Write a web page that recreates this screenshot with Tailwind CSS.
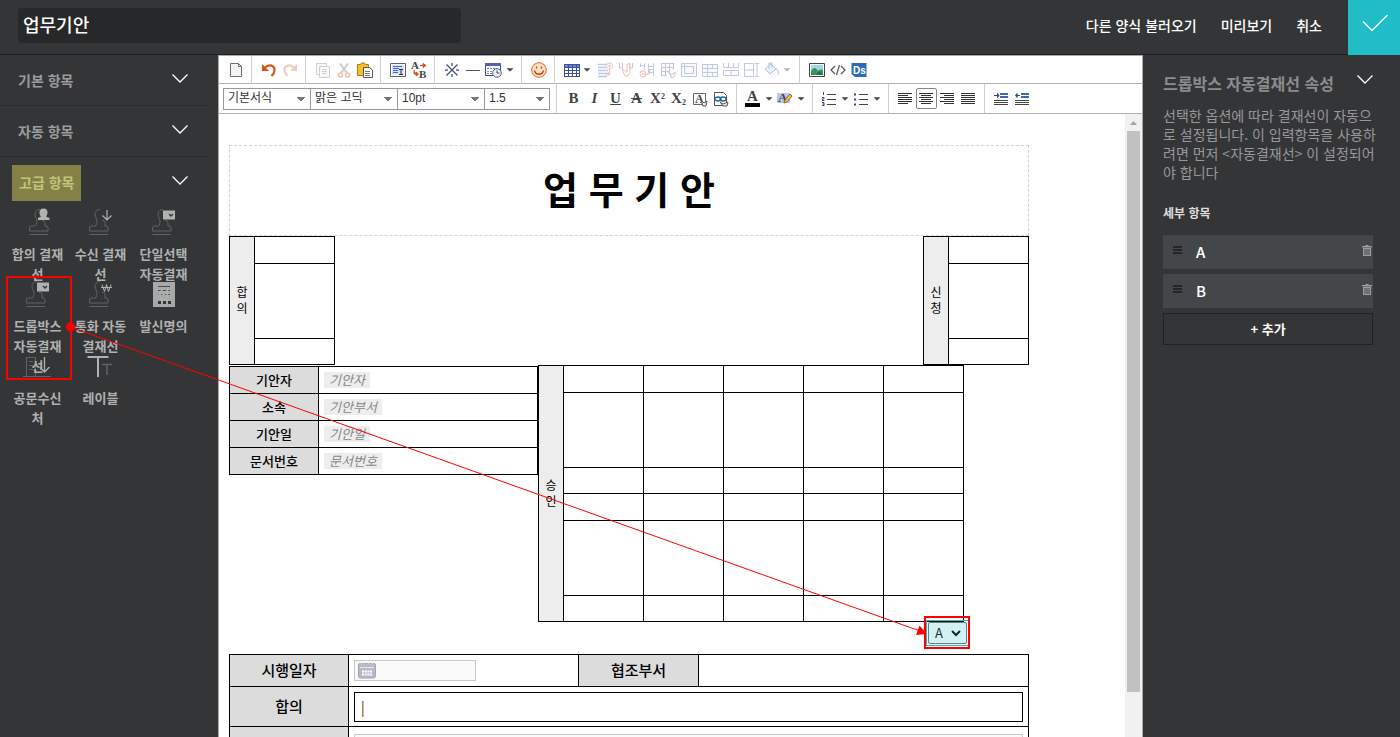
<!DOCTYPE html>
<html lang="ko">
<head>
    <meta charset="UTF-8">
    <meta name="viewport" content="width=device-width, initial-scale=1.0">
    <title>업무기안</title>
    <script src="https://cdn.jsdelivr.net/npm/@tailwindcss/browser@4"></script>
</head>
<body class="relative flex h-screen flex-col overflow-hidden bg-[#343537] font-['Noto_Sans_CJK_KR',sans-serif] text-white">

    <!-- Shared shapes -->
    <svg class="hidden">
        <symbol id="stamp" viewBox="0 0 30 28">
            <path d="M14 1.500c-3 0-5 2-5 5 0 2.500 2 4 2 7 0 1.500-.5 3-1.500 4.500H5.500a2 2 0 0 0-2 2V23h18.500v-3a2 2 0 0 0-2-2h-1v-3.500a2 2 0 0 0-2-2h-1M3.500 26.500h18.500" fill="none" stroke="#616263" />
        </symbol>
        <symbol id="caret" viewBox="0 0 8 5"><path d="M0 0h8v1H7v1H6v1H5v1H3V3H2V2H1V1H0z" fill="currentColor" /></symbol>
        <symbol id="chevron" viewBox="0 0 16 9"><path d="M.5.5 8 8 15.500.5" fill="none" stroke="#fff" stroke-width="1.3" /></symbol>
        <symbol id="trash" viewBox="0 0 10 11"><path d="M3.500 0h3v1H10v1.500H0V1h3.500zM1 3h8v8H1z" fill="#9b9c9d" /><path d="M3 4v6M5 4v6M7 4v6" stroke="#444749" /></symbol>
        <symbol id="grip" viewBox="0 0 9 8"><path d="M0 1h9M0 4h9M0 7h9" stroke="#242628" stroke-width="2" /></symbol>
    </svg>

    <header class="flex h-[55px] shrink-0 items-center border-b border-[#1f2021]">
        <input type="text" aria-label="양식 제목" value="업무기안" class="ml-[18px] mb-1 h-[35px] w-[443px] rounded bg-[#27282a] px-[5px] pb-[2px] text-lg font-medium text-white">
        <nav class="ml-auto flex h-[55px] items-center text-sm font-medium">
            <a href="#load" class="mr-6 mb-1">다른 양식 불러오기</a>
            <a href="#preview" class="mr-6 mb-1">미리보기</a>
            <a href="#cancel" class="mr-[26px] mb-1">취소</a>
            <button aria-label="저장" class="h-[55px] w-[52px] bg-[#20bdc9]">
                <svg class="ml-[14px] -mt-2 h-[18px] w-[26px]" viewBox="0 0 26 18" fill="none" stroke="#fff" stroke-width="1.300"><path d="M1 7.500 10 16.500 25.500 1" /></svg>
            </button>
        </nav>
    </header>

    <main class="flex min-h-0 flex-1">
        <!-- Left: form items -->
        <aside class="w-[218px] shrink-0 pr-[10px] text-sm font-bold text-[#9b9c9d]">
            <button class="flex h-[51px] w-full items-center justify-between border-b border-[#292a2c] pl-[18px] pr-5">기본 항목<svg class="mb-1 h-[9px] w-4"><use href="#chevron" /></svg></button>
            <button class="flex h-[51px] w-full items-center justify-between border-b border-[#292a2c] pl-[18px] pr-5">자동 항목<svg class="mb-1 h-[9px] w-4"><use href="#chevron" /></svg></button>
            <button class="flex h-[51px] w-full items-center justify-between pl-3 pr-5">
                <span class="bg-[#838146] px-[7px] pt-[7px] pb-[9px] text-[#c4c27c]">고급 항목</span>
                <svg class="mb-1 h-[9px] w-4"><use href="#chevron" /></svg>
            </button>
            <div class="grid w-[195px] grid-cols-3 pl-[6px] text-[13px] leading-5 text-[#b0b1b1]">
                <button class="relative z-20 flex h-[72px] flex-col items-center justify-start px-1">
                    <svg class="mb-2 h-7 w-[30px] shrink-0" viewBox="0 0 30 28"><use href="#stamp" x="3" width="30" height="28" /><path d="M16.500 4.500a4 4 0 0 1 8 0c0 2-.8 3-1.500 4l3.500 1.500V12H15v-2l3-1.500c-1-1-1.500-2-1.500-4z" fill="#b0b1b1" /></svg>
                    합의 결재선
                </button>
                <button class="relative z-20 flex h-[72px] flex-col items-center justify-start px-1">
                    <svg class="mb-2 h-7 w-[30px] shrink-0" viewBox="0 0 30 28"><use href="#stamp" width="30" height="28" /><path d="M21 2v10M16.500 7.500 21 12l4.500-4.500" fill="none" stroke="#b0b1b1" stroke-width="1.200" /></svg>
                    수신 결재선
                </button>
                <button class="relative z-20 flex h-[72px] flex-col items-center justify-start px-1">
                    <svg class="mb-2 h-7 w-[30px] shrink-0" viewBox="0 0 30 28"><use href="#stamp" width="30" height="28" /><path d="M14 2.500h12v9H14z" fill="#b0b1b1" /><path d="m20 6 2 2 2-2" fill="none" stroke="#343537" stroke-width="1.300" /></svg>
                    단일선택 자동결재선
                </button>
                <button class="relative z-10 flex h-[72px] flex-col items-center justify-start px-1">
                    <svg class="mb-2 h-7 w-[30px] shrink-0" viewBox="0 0 30 28"><use href="#stamp" width="30" height="28" /><path d="M14 2.500h12v9H14z" fill="#b0b1b1" /><path d="m20 6 2 2 2-2" fill="none" stroke="#343537" stroke-width="1.300" /></svg>
                    드롭박스 자동결재선
                </button>
                <button class="relative z-10 flex h-[72px] flex-col items-center justify-start px-1">
                    <svg class="mb-2 h-7 w-[30px] shrink-0" viewBox="0 0 30 28"><use href="#stamp" width="30" height="28" /><path d="m16 4.500 2.500 7 2-7 2 7 2.500-7M15 7.500h11" fill="none" stroke="#b0b1b1" /></svg>
                    통화 자동결재선
                </button>
                <button class="relative z-10 flex h-[72px] flex-col items-center justify-start px-1">
                    <svg class="mb-2 h-7 w-[30px] shrink-0" viewBox="0 0 30 28"><path d="M4 2h22v25H4z" fill="#a7a8a9" /><path d="M9 6.500h12M9 10.500h12M9 14.500h12" stroke="#4b4c4e" /><path d="M9 22.500h3M14 22.500h3M19 22.500h3" stroke="#343537" stroke-width="3" /></svg>
                    발신명의
                </button>
                <button class="flex h-[72px] flex-col items-center justify-start px-1">
                    <svg class="mb-2 h-7 w-[30px] shrink-0" viewBox="0 0 30 28"><path d="M3.500 24V5.500h9V24M6 9.500h4M6 13.500h4M6 17.500h4M0 24.500h28" fill="none" stroke="#616263" /><path d="M21.500 5v15M16.500 15l5 5 5-5" fill="none" stroke="#b0b1b1" stroke-width="1.300" /></svg>
                    공문수신처
                </button>
                <button class="flex h-[72px] flex-col items-center justify-start px-1">
                    <svg class="mb-2 h-7 w-[30px] shrink-0" viewBox="0 0 30 28"><path d="M1.500 5h21M12 5v20" stroke="#b0b1b1" stroke-width="2" /><path d="M16 12.500h10M21 12v11" stroke="#616263" stroke-width="1.500" /></svg>
                    레이블
                </button>
            </div>
        </aside>

        <!-- Center: editor -->
        <section class="flex min-w-0 flex-1 flex-col border border-b-0 border-[#a9a9a9] bg-white text-black">
            <div class="flex h-7 shrink-0 items-center border-b border-[#b0b0b0] text-[#444]">
                <div class="flex pl-[6px] pr-[5px]">
                    <button aria-label="새 문서" class="flex w-[21px] justify-center"><svg class="size-4" viewBox="0 0 16 16"><path d="M2.500 1.500h8l3 3v10h-11z" fill="#f5f5f5" stroke="#707070" /><path d="M10.500 1.500v3h3" fill="none" stroke="#707070" /></svg></button>
                </div>
                <div class="flex h-7 items-center border-l border-[#d0d0d0] pl-[6px] pr-[5px]">
                    <button aria-label="실행 취소" class="flex w-[21px] justify-center"><svg class="size-4" viewBox="0 0 16 16"><path d="M4 5.500c4-4 10-2 9.500 3 0 2.500-1.500 4-3 5.500" fill="none" stroke="#d9541a" stroke-width="2.200" /><path d="M1 2v7h7z" fill="#d9541a" /></svg></button>
                    <button aria-label="다시 실행" class="flex w-[21px] justify-center opacity-30"><svg class="size-4" viewBox="0 0 16 16"><path d="M12 5.500c-4-4-10-2-9.500 3 0 2.500 1.500 4 3 5.500" fill="none" stroke="#d9541a" stroke-width="2.200" /><path d="M15 2v7H8z" fill="#d9541a" /></svg></button>
                </div>
                <div class="flex h-7 items-center border-l border-[#d0d0d0] pl-[6px] pr-[5px]">
                    <button aria-label="복사" class="flex w-[21px] justify-center opacity-35"><svg class="size-4" viewBox="0 0 16 16" fill="#f2f2f2" stroke="#777"><path d="M1.500 1.500h10v11h-10z" /><path d="M4.500 4.500h10v11h-10z" /><path d="M7 7.500h5M7 9.500h5M7 11.500h5" /></svg></button>
                    <button aria-label="잘라내기" class="flex w-[21px] justify-center opacity-35"><svg class="size-4" viewBox="0 0 16 16" fill="none"><path d="M4 1.500 11 11M12 1.500 5 11" stroke="#666" stroke-width="2" /><circle cx="4.500" cy="13" r="2" stroke="#d9541a" stroke-width="1.500" /><circle cx="11.500" cy="13" r="2" stroke="#d9541a" stroke-width="1.500" /></svg></button>
                    <button aria-label="붙여넣기" class="flex w-[21px] justify-center"><svg class="size-4" viewBox="0 0 16 16"><path d="M.5 2.500h3l1-1.500h3l1 1.500h3v11H.5z" fill="#f8bd24" stroke="#b07a12" /><path d="M6.500 5.500h6l3 2.500v7.500h-9z" fill="#fff" stroke="#555" /><path d="M8 9.500h5M8 11.500h5M8 13.500h5" stroke="#777" /></svg></button>
                </div>
                <div class="flex h-7 items-center border-l border-[#d0d0d0] pl-[6px] pr-[5px]">
                    <button aria-label="모두 선택" class="flex w-[21px] justify-center"><svg class="size-4" viewBox="0 0 16 16"><path d="M.5 1.500h15v13H.5z" fill="#fff" stroke="#5c6173" /><path d="M2 3h12v9H2z" fill="#d5dfff" /><path d="M3 4.500h9M3 6.500h6M3 8.500h5M3 10.500h5" stroke="#4a68c8" /><path d="M9 7.500h4M11 7.500v5M9 12.500h4" stroke="#333" /></svg></button>
                    <button aria-label="찾기/바꾸기" class="flex w-[21px] justify-center"><svg class="h-4 w-[18px] overflow-visible font-['Liberation_Serif',serif] text-[11px] font-bold" viewBox="0 0 18 16"><text x="1" y="7" fill="#444">A</text><text x="9" y="16" fill="#444">B</text><path d="M10 3.500h3V1.500l3 2-3 2V3.500M4 8v4h2v-2l2.500 2L6 14v-2" fill="#d9541a" stroke="#d9541a" /></svg></button>
                </div>
                <div class="flex h-7 items-center border-l border-[#d0d0d0] pl-[6px] pr-[5px]">
                    <button aria-label="특수문자" class="flex w-[21px] justify-center"><svg class="size-4" viewBox="0 0 16 16"><path d="m2.500 2.500 11 11M13.500 2.500l-11 11" stroke="#454f74" stroke-width="1.300" /><path d="M7 1h2v3H7zM7 12h2v3H7zM1 7h3v2H1zM12 7h3v2h-3z" fill="#7b87b4" /></svg></button>
                    <button aria-label="가로줄" class="flex w-[21px] justify-center"><svg class="size-4" viewBox="0 0 16 16"><path d="M1 8.500h14" stroke="#555" /></svg></button>
                    <button aria-label="날짜" class="flex w-[33px] items-center gap-1 pl-px"><svg class="h-4 w-[19px] shrink-0" viewBox="0 0 19 16"><path d="M1.500 1.500h15v12h-15z" fill="#fff" stroke="#3d4a86" /><path d="M1 1h16v3H1z" fill="#4e63b5" /><path d="M3 6.500h11M3 9.500h8M3 11.500h7" stroke="#7f8fc8" stroke-dasharray="2 1" /><circle cx="13" cy="11" r="4.300" fill="#eef1fa" stroke="#5c6484" /><path d="M13 8.500V11h2.500" fill="none" stroke="#444" /></svg><svg class="h-[4px] w-[6px]"><use href="#caret" /></svg></button>
                </div>
                <div class="flex h-7 items-center border-l border-[#d0d0d0] pl-[6px] pr-[5px]">
                    <button aria-label="이모티콘" class="flex w-[21px] justify-center"><svg class="size-4" viewBox="0 0 16 16"><circle cx="8" cy="8" r="7.300" fill="#ffdfc2" stroke="#d36a2c" /><path d="M5.500 4.500v2M10.500 4.500v2M3.500 8.500c1 5 8 5 9 0" fill="none" stroke="#b8440c" stroke-width="1.300" /></svg></button>
                </div>
                <div class="flex h-7 items-center border-l border-[#d0d0d0] pl-[6px] pr-[5px]">
                    <button aria-label="표" class="flex w-[33px] items-center gap-1 pl-[3px]"><svg class="size-4" viewBox="0 0 16 16"><path d="M1 2h14v12H1z" fill="#fff" /><path d="M1 2h14v3H1z" fill="#6e84d4" /><path d="M.5 2.500h15M.5 5.500h15M.5 8.500h15M.5 11.500h15M.5 14.500h15M.5 2v13M4.500 2v13M8.500 2v13M12.500 2v13M15.500 2v13" stroke="#3e519f" /></svg><svg class="h-[4px] w-[6px]"><use href="#caret" /></svg></button>
                    <button aria-label="행 삽입" class="flex w-[21px] justify-center opacity-35"><svg class="size-4" viewBox="0 0 16 16" fill="none" stroke="#4a64c0"><path d="M1 2.500h9M1 5.500h8M1 8.500h10M1 11.500h11M1 14.500h9" stroke-width="1.500" /><circle cx="12.500" cy="4" r="3" stroke="#e0482e" /><path d="M11 4h3M12.500 2.500v3M12.500 7v6H9" stroke="#e0482e" /></svg></button>
                    <button aria-label="행 삭제" class="flex w-[21px] justify-center opacity-35"><svg class="size-4" viewBox="0 0 16 16" fill="none" stroke="#4a64c0"><path d="M1.500 1v5h3V1M11.500 1v5h3V1" /><path d="m4 7 5 3V2h3v8l-2 4H7z" stroke="#e0482e" /></svg></button>
                    <button aria-label="열 삽입" class="flex w-[21px] justify-center opacity-35"><svg class="size-4" viewBox="0 0 16 16" fill="none" stroke="#4a64c0"><path d="M5.500 8V1.500M9.500 11V1.500M14.500 14V1.500M1.500 5V1.500M1 3.500h4M10 4.500h4M10 7.500h4M10 10.500h4" /><circle cx="4" cy="12" r="3" stroke="#e0482e" /><path d="M2.500 12h8V8" stroke="#e0482e" /></svg></button>
                    <button aria-label="표 편집" class="flex w-[21px] justify-center opacity-35"><svg class="size-4" viewBox="0 0 16 16" fill="none" stroke="#4a64c0"><path d="M1 1.500h12M1 5.500h12M1 9.500h9M1 13.500h6M1.500 1v13M5.500 1v13M9.500 1v9M13.500 1v7" /><path d="m8 9 4 4 3-3v4l-3 2z" stroke="#666" /></svg></button>
                    <button aria-label="표 속성" class="flex w-[21px] justify-center opacity-35"><svg class="size-4" viewBox="0 0 16 16" fill="#eef1ff" stroke="#4a64c0"><path d="M.5 1.500h15v13H.5zM3.500 4.500h9v7h-9zM.5 4.500h3M3.500 1.500v3" /></svg></button>
                    <button aria-label="셀 속성" class="flex w-[21px] justify-center opacity-35"><svg class="size-4" viewBox="0 0 16 16" fill="#eef1ff" stroke="#4a64c0"><path d="M.5 2.500h15v12H.5zM.5 6.500h15M.5 10.500h15M5.500 2.500v12M10.500 2.500v4M10.500 10.500v4" /></svg></button>
                    <button aria-label="셀 병합" class="flex w-[21px] justify-center opacity-35"><svg class="size-4" viewBox="0 0 16 16" fill="none" stroke="#4a64c0"><path d="M.5 1v4.500h15V1M5.500 1v4M10.500 1v4M.5 8.500h15v5H.5zM8 8.500v5" /></svg></button>
                    <button aria-label="셀 분할" class="flex w-[21px] justify-center opacity-35"><svg class="size-4" viewBox="0 0 16 16" fill="none" stroke="#4a64c0"><path d="M.5 1.500h9v13h-9zM.5 8h9M11 1.500h4M13 1.500v13M11 14.500h4" /></svg></button>
                    <button aria-label="셀 배경색" class="flex w-[32px] items-center gap-1 pl-[2px] opacity-40"><svg class="size-4" viewBox="0 0 16 16" fill="#cfdaff" stroke="#4a64c0"><path d="m1 7 6-5 5 5-6 5zM5 7V1h3v5M12 6c2 2 2.500 4 2 7" /></svg><svg class="h-[4px] w-[6px]"><use href="#caret" /></svg></button>
                </div>
                <div class="flex h-7 items-center border-l border-[#d0d0d0] pl-[6px]">
                    <button aria-label="이미지" class="flex w-[21px] justify-center"><svg class="size-4" viewBox="0 0 16 16"><path d="M.5 1.500h15v13H.5z" fill="#fff" stroke="#444" /><path d="M2 3h12v10H2z" fill="#9ed6ee" /><path d="M2 9c3-5 5-3 7 0l3-2 2 2v4H2z" fill="#3e8f58" /><path d="m7 13 3-4 4 4z" fill="#1e6b5c" /></svg></button>
                    <button aria-label="HTML" class="flex w-[21px] justify-center"><svg class="size-4" viewBox="0 0 16 16" fill="none" stroke="#555" stroke-width="1.200"><path d="M5 4 1 8l4 4M11 4l4 4-4 4M9.500 3l-3 10" /></svg></button>
                    <button aria-label="Ds" class="flex w-[21px] justify-center"><svg class="size-4 font-['Liberation_Sans',sans-serif] text-[10px] font-bold" viewBox="0 0 16 16"><path d="M.5 1h15v14H4L.5 12z" fill="#2f6bb4" /><text x="2" y="12" fill="#fff">Ds</text></svg></button>
                </div>
            </div>

            <div class="flex h-[30px] shrink-0 items-center border-b border-[#b0b0b0] pl-1 text-[#444]">
                <div class="flex pr-[6px] font-['Liberation_Sans','Noto_Sans_CJK_KR',sans-serif] text-xs text-[#333]">
                    <div class="relative">
                        <select aria-label="서식" class="h-[22px] w-[88px] appearance-none border border-[#999] bg-white pb-[2px] pl-1"><option>기본서식</option></select>
                        <svg class="pointer-events-none absolute right-[6px] top-[9px] h-[5px] w-2 text-[#777]"><use href="#caret" /></svg>
                    </div>
                    <div class="relative -ml-px">
                        <select aria-label="글꼴" class="h-[22px] w-[88px] appearance-none border border-[#999] bg-white pb-[2px] pl-1"><option>맑은 고딕</option></select>
                        <svg class="pointer-events-none absolute right-[6px] top-[9px] h-[5px] w-2 text-[#777]"><use href="#caret" /></svg>
                    </div>
                    <div class="relative -ml-px">
                        <select aria-label="글자 크기" class="h-[22px] w-[88px] appearance-none border border-[#999] bg-white pb-[2px] pl-1"><option>10pt</option></select>
                        <svg class="pointer-events-none absolute right-[6px] top-[9px] h-[5px] w-2 text-[#777]"><use href="#caret" /></svg>
                    </div>
                    <div class="relative -ml-px">
                        <select aria-label="줄 간격" class="h-[22px] w-[66px] appearance-none border border-[#999] bg-white pb-[2px] pl-1"><option>1.5</option></select>
                        <svg class="pointer-events-none absolute right-[6px] top-[9px] h-[5px] w-2 text-[#777]"><use href="#caret" /></svg>
                    </div>
                </div>
                <div class="flex h-[29px] items-center border-l border-[#d0d0d0] pl-[6px] pr-[5px] font-['Liberation_Serif',serif] text-[15px] font-bold">
                    <button class="w-[21px]">B</button>
                    <button class="w-[21px] italic">I</button>
                    <button class="w-[21px] underline">U</button>
                    <button class="w-[21px] line-through">A</button>
                    <button class="w-[21px]">X<sup class="text-[8px]">2</sup></button>
                    <button class="w-[21px]">X<sub class="text-[8px]">2</sub></button>
                    <button aria-label="글자 속성" class="flex w-[21px] justify-center"><svg class="size-4 text-[12px]" viewBox="0 0 16 16"><path d="M1.500 2.500h12v11h-12z" fill="#fff" stroke="#667" /><text x="3" y="12" fill="#444">A</text><path d="m9 9 3 3 3-2-1 5h-3z" fill="#eee" stroke="#555" /></svg></button>
                    <button aria-label="링크" class="flex w-[21px] justify-center"><svg class="size-4" viewBox="0 0 16 16"><path d="M1.500 1.500h9l3 3v10h-12z" fill="#fff" stroke="#555" /><ellipse cx="5" cy="8" rx="3" ry="2" fill="none" stroke="#2a6496" stroke-width="1.300" /><ellipse cx="10" cy="8" rx="3" ry="2" fill="none" stroke="#2a6496" stroke-width="1.300" /><path d="m7 11 3 2 5-2-1 4h-4z" fill="#eee" stroke="#555" /></svg></button>
                </div>
                <div class="flex h-[29px] items-center border-l border-[#d0d0d0] pl-[6px] pr-[5px] font-['Liberation_Serif',serif] text-[15px] font-bold">
                    <button aria-label="글자색" class="flex w-[32px] items-center gap-[5px] pl-[2px]"><svg class="size-4 overflow-visible" viewBox="0 0 16 16"><text x="2" y="10" fill="#444">A</text><path d="M0 12h15v4H0z" fill="#000" /></svg><svg class="h-[4px] w-[6px]"><use href="#caret" /></svg></button>
                    <button aria-label="형광펜" class="flex w-[32px] items-center gap-[5px] pl-[2px]"><svg class="size-4 text-[13px]" viewBox="0 0 16 16"><path d="M0 2h13v10H0z" fill="#b9c9f6" /><text x="1" y="11" fill="#444">A</text><path d="m7 12 1-3 5-6 2 2-5 6z" fill="#f6c34a" stroke="#a5552a" /></svg><svg class="h-[4px] w-[6px]"><use href="#caret" /></svg></button>
                </div>
                <div class="flex h-[29px] items-center border-l border-[#d0d0d0] pl-[6px] pr-[5px]">
                    <button aria-label="번호 목록" class="flex w-[32px] items-center gap-[5px] pl-[2px]"><svg class="size-4" viewBox="0 0 16 16"><path d="M6 3.500h9M6 8.500h9M6 13.500h9" stroke="#444" /><path d="M2.500 1v3M1 6.500h2V8H1.500v1.500H3.500M1 11.500h2v3H1M1.500 13H3" fill="none" stroke="#3a4a7a" /></svg><svg class="h-[4px] w-[6px]"><use href="#caret" /></svg></button>
                    <button aria-label="글머리 목록" class="flex w-[32px] items-center gap-[5px] pl-[2px]"><svg class="size-4" viewBox="0 0 16 16"><path d="M6 3.500h9M6 8.500h9M6 13.500h9" stroke="#444" /><path d="M1 3.500h2M1 8.500h2M1 13.500h2" stroke="#3a4a7a" stroke-width="2" /></svg><svg class="h-[4px] w-[6px]"><use href="#caret" /></svg></button>
                </div>
                <div class="flex h-[29px] items-center border-l border-[#d0d0d0] pl-[6px] pr-[5px]">
                    <button aria-label="왼쪽 정렬" class="flex h-[21px] w-[21px] items-center justify-center"><svg class="h-4 w-[15px]" viewBox="0 0 15 16"><path d="M0 2.500h14M0 4.500h10M0 6.500h14M0 8.500h14M0 10.500h14M0 12.500h10" stroke="#333" /></svg></button>
                    <button aria-label="가운데 정렬" class="flex h-[21px] w-[21px] items-center justify-center rounded-xs border border-[#888]"><svg class="h-4 w-[15px] shrink-0" viewBox="0 0 15 16"><path d="M0 2.500h14M2 4.500h10M0 6.500h14M2 8.500h10M0 10.500h14M2 12.500h10" stroke="#333" /></svg></button>
                    <button aria-label="오른쪽 정렬" class="flex h-[21px] w-[21px] items-center justify-center"><svg class="h-4 w-[15px]" viewBox="0 0 15 16"><path d="M0 2.500h14M4 4.500h10M0 6.500h14M4 8.500h10M0 10.500h14M4 12.500h10" stroke="#333" /></svg></button>
                    <button aria-label="양쪽 정렬" class="flex h-[21px] w-[21px] items-center justify-center"><svg class="h-4 w-[15px]" viewBox="0 0 15 16"><path d="M0 2.500h14M0 4.500h14M0 6.500h14M0 8.500h14M0 10.500h14M0 12.500h14" stroke="#333" /></svg></button>
                </div>
                <div class="flex h-[29px] items-center border-l border-[#d0d0d0] pl-[6px]">
                    <button aria-label="들여쓰기" class="flex w-[21px] justify-center"><svg class="h-4 w-[15px]" viewBox="0 0 15 16"><path d="M6 2h8v2H6zM6 5h8v2H6z" fill="#4366b8" /><path d="M0 9.500h14M0 11.500h14M0 13.500h14" stroke="#444" /><path d="M0 4h3V1.500L5.500 4.500 3 7.500V5H0z" fill="#2e4a66" /></svg></button>
                    <button aria-label="내어쓰기" class="flex w-[21px] justify-center"><svg class="h-4 w-[15px]" viewBox="0 0 15 16"><path d="M6 2h8v2H6zM6 5h8v2H6z" fill="#4366b8" /><path d="M0 9.500h14M0 11.500h14M0 13.500h14" stroke="#444" /><path d="M5 4H2.500V1.500L0 4.500l2.500 3V5H5z" fill="#2e4a66" /></svg></button>
                </div>
            </div>

            <div class="flex min-h-0 flex-1">
                <!-- Document -->
                <div class="min-w-0 flex-1 overflow-hidden pl-[10px] pt-[31px] text-[13px]">
                    <div class="w-[800px]">
                        <h1 class="flex h-[91px] items-center justify-center border border-dashed border-[#d3d3d3] pb-[6px] text-[38px] font-bold">업 무 기 안</h1>

                        <div class="flex justify-between leading-4">
                            <table class="border-collapse">
                                <tr class="h-[27px]"><th rowspan="3" class="w-[25px] border border-black bg-[#ededed] pb-[2px] text-xs leading-4 font-normal">합<br>의</th><td class="w-20 border border-black"></td></tr>
                                <tr class="h-[75px]"><td class="border border-black"></td></tr>
                                <tr class="h-[26px]"><td class="border border-black"></td></tr>
                            </table>
                            <table class="border-collapse">
                                <tr class="h-[27px]"><th rowspan="3" class="w-[25px] border border-black bg-[#ededed] pb-[2px] text-xs leading-4 font-normal">신<br>청</th><td class="w-20 border border-black"></td></tr>
                                <tr class="h-[75px]"><td class="border border-black"></td></tr>
                                <tr class="h-[26px]"><td class="border border-black"></td></tr>
                            </table>
                        </div>

                        <div class="flex items-start leading-4">
                            <table class="mt-px w-[309px] table-fixed border-collapse">
                                <tr class="h-[27px]"><th class="w-[89px] border border-black bg-[#dcdcdc] font-medium">기안자</th><td class="border border-black px-[5px]"><span class="inline-block bg-[#ededed] px-[5px] text-[#888] italic">기안자</span></td></tr>
                                <tr class="h-[27px]"><th class="border border-black bg-[#dcdcdc] font-medium">소속</th><td class="border border-black px-[5px]"><span class="inline-block bg-[#ededed] px-[5px] text-[#888] italic">기안부서</span></td></tr>
                                <tr class="h-[27px]"><th class="border border-black bg-[#dcdcdc] font-medium">기안일</th><td class="border border-black px-[5px]"><span class="inline-block bg-[#ededed] px-[5px] text-[#888] italic">기안일</span></td></tr>
                                <tr class="h-[27px]"><th class="border border-black bg-[#dcdcdc] font-medium">문서번호</th><td class="border border-black px-[5px]"><span class="inline-block bg-[#ededed] px-[5px] text-[#888] italic">문서번호</span></td></tr>
                            </table>
                            <table class="w-[426px] table-fixed border-collapse">
                                <tr class="h-[27px]"><th rowspan="6" class="w-[25px] border border-black bg-[#ededed] pb-[2px] text-xs leading-4 font-normal">승<br>인</th><td class="border border-black"></td><td class="border border-black"></td><td class="border border-black"></td><td class="border border-black"></td><td class="border border-black"></td></tr>
                                <tr class="h-[75px]"><td class="border border-black"></td><td class="border border-black"></td><td class="border border-black"></td><td class="border border-black"></td><td class="border border-black"></td></tr>
                                <tr class="h-[26px]"><td class="border border-black"></td><td class="border border-black"></td><td class="border border-black"></td><td class="border border-black"></td><td class="border border-black"></td></tr>
                                <tr class="h-[27px]"><td class="border border-black"></td><td class="border border-black"></td><td class="border border-black"></td><td class="border border-black"></td><td class="border border-black"></td></tr>
                                <tr class="h-[75px]"><td class="border border-black"></td><td class="border border-black"></td><td class="border border-black"></td><td class="border border-black"></td><td class="border border-black"></td></tr>
                                <tr class="h-[26px]"><td class="border border-black"></td><td class="border border-black"></td><td class="border border-black"></td><td class="border border-black"></td><td class="border border-black"></td></tr>
                            </table>
                        </div>

                        <div class="flex h-8 justify-end pr-[62px]">
                            <div class="relative h-[22px] w-[39px] bg-[#d2f1f3] outline-1 outline-offset-1 outline-[#20bdc9]">
                                <select aria-label="드롭박스 자동결재선" class="h-[22px] w-full appearance-none rounded-xs border border-[#688082] bg-[#d2f1f3] pl-[6px] text-[13px] leading-5 text-[#1c3335]"><option>A</option><option>B</option></select>
                                <svg class="pointer-events-none absolute right-[6px] top-2 h-[7px] w-[10px]" viewBox="0 0 10 7"><path d="m1 1 4 4 4-4" fill="none" stroke="#14292b" stroke-width="2" /></svg>
                            </div>
                        </div>

                        <table class="w-full table-fixed border-collapse text-[15px] leading-5">
                            <tr class="h-8">
                                <th class="w-[119px] border border-black bg-[#dcdcdc] pb-[2px] font-medium">시행일자</th>
                                <td class="w-[230px] border border-black px-[5px]">
                                    <label class="flex h-[21px] w-[122px] items-center border border-[#c8c8c8] bg-[#f9f9f9] pl-[3px]">
                                        <svg class="h-[17px] w-[18px] shrink-0" viewBox="0 0 18 17"><path d="M.5 3a1.500 1.500 0 0 1 1.500-1.500h14A1.500 1.500 0 0 1 17.500 3v11a2 2 0 0 1-2 2h-13a2 2 0 0 1-2-2z" fill="#b7bac7" stroke="#a2a5b3" /><path d="M2 5.500h14M3.500 0v2M7 0v2M11 0v2M14.500 0v2" stroke="#e4e5eb" /><path d="M4 9.500h10M4 12.500h10" stroke="#fff" stroke-width="2" stroke-dasharray="2 .7" /></svg>
                                        <input type="text" aria-label="시행일자" class="w-full text-sm">
                                    </label>
                                </td>
                                <th class="w-[120px] border border-black bg-[#dcdcdc] pb-[2px] font-medium">협조부서</th>
                                <td class="border border-black"></td>
                            </tr>
                            <tr class="h-10">
                                <th class="border border-black bg-[#dcdcdc] pb-[2px] font-medium">합의</th>
                                <td colspan="3" class="border border-black px-[5px]"><div class="flex h-[30px] items-center border border-black px-[7px]"><span class="mt-1 h-4 w-[2px] border-r border-[#9cc4ee] bg-[#c8820a]"></span></div></td>
                            </tr>
                            <tr class="h-24">
                                <th class="border border-black bg-[#dcdcdc]"></th>
                                <td colspan="3" class="border border-black px-[5px] pt-[7px] align-top"><input type="text" aria-label="내용" class="h-[21px] w-full border border-[#c8c8c8] bg-[#f9f9f9]"></td>
                            </tr>
                        </table>
                    </div>
                </div>

                <!-- Scrollbar -->
                <div class="flex w-[17px] shrink-0 flex-col items-center bg-[#f1f1f1]">
                    <svg class="h-[17px] w-[7px] shrink-0" viewBox="0 0 7 17"><path d="M3.500 7 7 11H0z" fill="#a3a3a3" /></svg>
                    <div class="h-9/10 w-[13px] bg-[#c1c1c1]"></div>
                </div>
            </div>
        </section>

        <!-- Right: properties -->
        <aside class="w-[257px] shrink-0 pl-5 pr-[27px]">
            <div class="flex items-start justify-between pt-4">
                <h2 class="text-base font-bold text-[#8b8c8d]">드롭박스 자동결재선 속성</h2>
                <svg class="mt-1 h-[9px] w-4"><use href="#chevron" /></svg>
            </div>
            <p class="mt-[11px] text-sm leading-[19px] whitespace-nowrap text-[#979899]">선택한 옵션에 따라 결재선이 자동으<br>로 설정됩니다. 이 입력항목을 사용하<br>려면 먼저 &lt;자동결재선&gt; 이 설정되어<br>야 합니다</p>
            <h3 class="mt-[22px] text-xs leading-[18px] font-bold text-[#dedede]">세부 항목</h3>
            <ul class="mt-[13px] flex flex-col gap-[5px] text-[15px] font-medium">
                <li class="flex h-[34px] items-center bg-[#444749] pl-[10px]"><svg class="mb-1 h-2 w-[9px]"><use href="#grip" /></svg><span class="ml-[14px]">A</span><button aria-label="A 삭제" class="mr-px mb-1 ml-auto"><svg class="h-[11px] w-[10px]"><use href="#trash" /></svg></button></li>
                <li class="flex h-[34px] items-center bg-[#444749] pl-[10px]"><svg class="mb-1 h-2 w-[9px]"><use href="#grip" /></svg><span class="ml-[14px]">B</span><button aria-label="B 삭제" class="mr-px mb-1 ml-auto"><svg class="h-[11px] w-[10px]"><use href="#trash" /></svg></button></li>
            </ul>
            <button class="mt-[5px] h-8 w-full border border-[#212223] text-[13px] font-bold">+ 추가</button>
        </aside>
    </main>

    <!-- Callout from the palette item to the placed field -->
    <svg class="pointer-events-none absolute left-0 top-0 z-30" width="1400" height="737" viewBox="0 0 1400 737" fill="none" stroke="#f00">
        <path d="M7 277h64v102H7zM925 617h44v31h-44z" stroke-width="2" />
        <path d="M70.500 327 920 631" />
        <circle cx="70.500" cy="327" r="4.500" fill="#f00" stroke="none" />
        <path d="m927 634-11 1 3.500-9.500z" fill="#f00" stroke="none" />
    </svg>
</body>
</html>
